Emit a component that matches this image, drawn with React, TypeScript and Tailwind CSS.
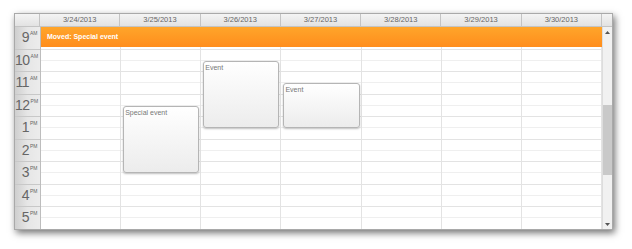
import React from 'react';

const DAYS = ['3/24/2013', '3/25/2013', '3/26/2013', '3/27/2013', '3/28/2013', '3/29/2013', '3/30/2013'];
const HOURS = [
    { h: '9', m: 'AM' },
    { h: '10', m: 'AM' },
    { h: '11', m: 'AM' },
    { h: '12', m: 'PM' },
    { h: '1', m: 'PM' },
    { h: '2', m: 'PM' },
    { h: '3', m: 'PM' },
    { h: '4', m: 'PM' },
    { h: '5', m: 'PM' },
];
const HOUR = 22.5;

// start/end in hours from 9 AM
const EVENTS = [
    { text: 'Special event', day: 1, start: 3.5, end: 6.5 },
    { text: 'Event', day: 2, start: 1.5, end: 4.5 },
    { text: 'Event', day: 3, start: 2.5, end: 4.5 },
];

export default function App() {
    return (
        <div className="w-[632px] h-[249px] bg-white pl-[14px] pt-[13px] font-['Liberation_Sans',Arial,sans-serif]">
            <div className="w-[599px] h-[217px] border border-[#a9a9a9] bg-white flex flex-col shadow-[2px_3px_7px_rgba(0,0,0,0.55)] overflow-hidden">
                {/* header */}
                <div className="flex h-[13px] shrink-0 border-b border-[#c4c4c4] bg-gradient-to-b from-[#f4f4f4] to-[#e2e2e2]">
                    <div className="w-[25px] shrink-0 border-r border-[#c4c4c4]"></div>
                    {DAYS.map((d) => (
                        <div key={d} className="flex-1 border-r border-[#c4c4c4] text-[7.5px] leading-[12px] text-center text-[#666]">
                            {d}
                        </div>
                    ))}
                    <div className="w-[10px] shrink-0"></div>
                </div>

                <div className="flex flex-1 overflow-hidden">
                    {/* row headers */}
                    <div className="w-[26px] shrink-0 flex flex-col border-r border-[#bdbdbd] bg-gradient-to-r from-[#cfcfcf] via-[#e6e6e6] to-[#ececec]">
                        {HOURS.map((r) => (
                            <div key={r.h + r.m} className="h-[22.5px] shrink-0 border-b border-[#c8c8c8] flex justify-end pr-[1px] pt-[3px] text-[#666]">
                                <span className="text-[14px] leading-none tracking-[-0.5px]">{r.h}</span>
                                <span className="text-[5px] leading-none pl-[1px] pt-[1px] w-[10px]">{r.m}</span>
                            </div>
                        ))}
                    </div>

                    {/* grid */}
                    <div className="relative flex-1 flex">
                        {DAYS.map((d) => (
                            <div key={d} className="flex-1 border-r border-[#e3e3e3] flex flex-col">
                                {HOURS.map((r) => (
                                    <div key={r.h + r.m} className="h-[22.5px] shrink-0 border-b border-[#e3e3e3] flex flex-col">
                                        <div className="h-[11px] border-b border-[#efefef]"></div>
                                    </div>
                                ))}
                            </div>
                        ))}

                        <div className="absolute left-0 right-0 top-0 h-[20px] bg-gradient-to-b from-[#ffa52a] to-[#ff8d1c] text-white font-bold text-[7px] leading-[20px] pl-[6px]">
                            Moved: Special event
                        </div>

                        {EVENTS.map((e, i) => (
                            <div
                                key={i}
                                className="absolute rounded-[3px] border border-[#b5b5b5] bg-gradient-to-b from-white to-[#ececec] shadow-[0_1px_2px_rgba(0,0,0,0.25)] text-[7px] text-[#777] px-[1px] pt-[1px] leading-[9px]"
                                style={{
                                    left: `calc(${(e.day / 7) * 100}% + 2px)`,
                                    width: `calc(${100 / 7}% - 4px)`,
                                    top: e.start * HOUR,
                                    height: (e.end - e.start) * HOUR,
                                }}
                            >
                                {e.text}
                            </div>
                        ))}
                    </div>

                    {/* scrollbar */}
                    <div className="w-[10px] shrink-0 bg-[#f1f1f1] border-l border-[#dddddd] flex flex-col items-center">
                        <div className="h-[10px] flex items-center justify-center">
                            <svg width="5" height="3" viewBox="0 0 5 3"><path d="M0 3 L2.5 0 L5 3 Z" fill="#555" /></svg>
                        </div>
                        <div className="h-[68px]"></div>
                        <div className="w-full h-[70px] bg-[#c9c9c9]"></div>
                        <div className="flex-1"></div>
                        <div className="h-[10px] flex items-center justify-center">
                            <svg width="5" height="3" viewBox="0 0 5 3"><path d="M0 0 L2.5 3 L5 0 Z" fill="#555" /></svg>
                        </div>
                    </div>
                </div>
            </div>
        </div>
    );
}
